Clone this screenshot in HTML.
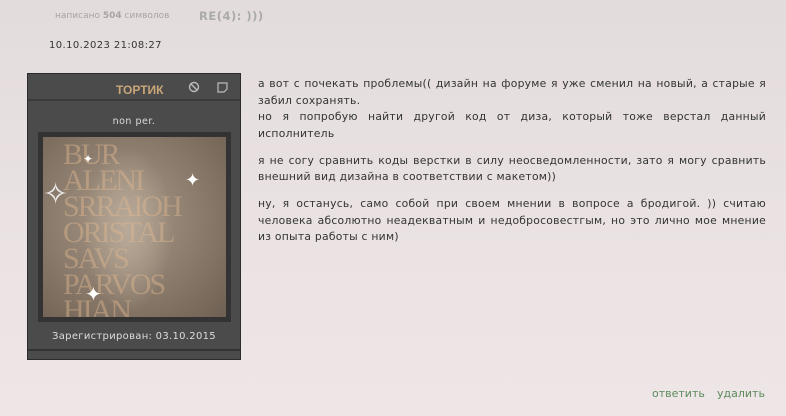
<!DOCTYPE html>
<html><head><meta charset="utf-8"><style>
body{margin:0;width:786px;height:416px;overflow:hidden;background:linear-gradient(#e3dcdc,#ebe3e3 60%,#eee6e6);font-family:"DejaVu Sans","Liberation Sans",sans-serif;position:relative}
.a{position:absolute}
.t{left:258px;top:76px;width:508px;font-size:10.8px;line-height:16.5px;color:#333;text-align:justify;letter-spacing:.24px}
.t p{margin:0 0 10.5px}
</style></head><body>
<div class="a" style="left:55px;top:11px;font-size:9px;color:#a9a3a3">написано <b>504</b> символов</div>
<div class="a" style="left:199px;top:9px;font-size:11.5px;color:#aaa;font-weight:bold;letter-spacing:.5px">RE(4): )))</div>
<div class="a" style="left:49px;top:40px;font-size:10px;color:#333;letter-spacing:.4px">10.10.2023 21:08:27</div>
<div class="a" style="left:27px;top:73px;width:212px;height:285px;background:#4b4b4b;border:1px solid #2c2c2c">
 <div class="a" style="left:0;top:0;width:212px;height:25px;border-bottom:2px solid #3a3a3a"></div>
 <div class="a" style="left:88px;top:9px;font:bold 12px 'Liberation Sans',sans-serif;color:#c8a678">ТОРТИК</div>
 <svg class="a" style="left:160px;top:7px" width="12" height="12"><circle cx="6" cy="6" r="4.5" fill="none" stroke="#bbb" stroke-width="1.4"/><line x1="3" y1="3" x2="9" y2="9" stroke="#bbb" stroke-width="1.4"/></svg>
 <svg class="a" style="left:189px;top:8px" width="11" height="11"><path d="M1 1H10V7L7 10H1Z" fill="none" stroke="#bbb" stroke-width="1.2"/></svg>
 <div class="a" style="left:0;width:212px;top:42px;text-align:center;font-size:9.5px;color:#ddd;letter-spacing:.5px">non per.</div>
 <div class="a" style="left:10px;top:58px;width:193px;height:190px;background:#333"></div>
 <div class="a" style="left:15px;top:63px;width:183px;height:180px;background:radial-gradient(ellipse at 45% 45%,#a89888,#8a7a6b 55%,#6e6052);overflow:hidden">
  <div class="a" style="left:40px;top:10px;width:90px;height:165px;background:radial-gradient(ellipse,#b8a998,transparent 70%)"></div>
  <div class="a" style="left:20px;top:5px;font:30px 'Liberation Serif',serif;color:rgba(225,185,145,.45);line-height:26px;letter-spacing:-2px">BUR<br>ALENI<br>SRRAIOH<br>ORISTAL<br>SAVS<br>PARVOS<br>HIAN</div>
  <div class="a" style="left:42px;top:145px;color:#fff;font-size:20px">✦</div>
  <div class="a" style="left:142px;top:33px;color:#fff;font-size:18px">✦</div>
  <div class="a" style="left:40px;top:15px;color:#fff;font-size:12px">✦</div>
  <div class="a" style="left:0px;top:40px;color:#eee;font-size:30px">✧</div>
 </div>
 <div class="a" style="left:0;width:212px;top:257px;text-align:center;font-size:10px;color:#ddd;letter-spacing:.3px">Зарегистрирован: 03.10.2015</div>
 <div class="a" style="left:0;top:275px;width:212px;height:2px;background:#333"></div>
</div>
<div class="a t">
<p>а вот с почекать проблемы(( дизайн на форуме я уже сменил на новый, а старые я забил сохранять.<br>но я попробую найти другой код от диза, который тоже верстал данный исполнитель</p>
<p>я не согу сравнить коды верстки в силу неосведомленности, зато я могу сравнить внешний вид дизайна в соответствии с макетом))</p>
<p>ну, я останусь, само собой при своем мнении в вопросе а бродигой. )) считаю человека абсолютно неадекватным и недобросовестгым, но это лично мое мнение из опыта работы с ним)</p>
</div>
<div class="a" style="left:652px;top:387px;font-size:11px;color:#5b8a5b">ответить</div>
<div class="a" style="left:717px;top:387px;font-size:11px;color:#5b8a5b">удалить</div>
</body></html>
